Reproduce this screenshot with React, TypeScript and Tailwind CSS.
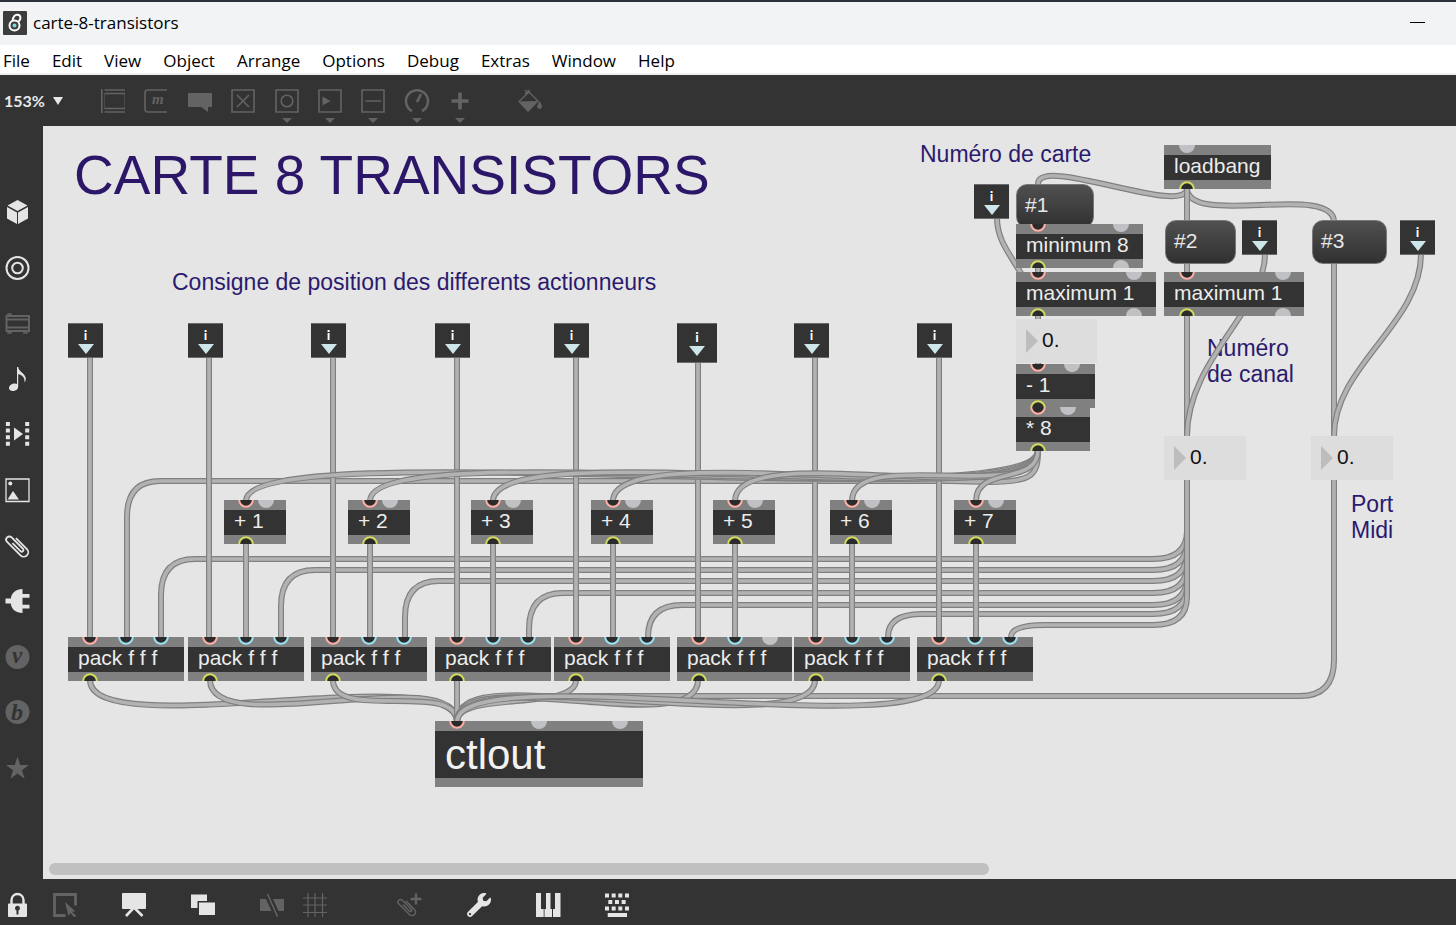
import { ReactNode } from "react";
import { FaWrench } from "react-icons/fa";

type Port = { at: number; kind: "hot" | "cold" | "out" | "idle" };

type ObjectBox = {
  text: string;
  x: number;
  y: number;
  w: number;
  inlets: Port[];
  outlets: Port[];
  large?: boolean;
};

// patcher coordinates are stored relative to the window, not to the canvas
const ORIGIN_X = 43;
const ORIGIN_Y = 126;

const place = (x: number, y: number, w?: number, h?: number) => ({
  left: x - ORIGIN_X,
  top: y - ORIGIN_Y,
  width: w,
  height: h,
});

const portColors = {
  hot: "#ffb0a4",
  cold: "#9be3f2",
  out: "#d3dc5c",
  idle: "#bfc1c4",
};

const menus = ["File", "Edit", "View", "Object", "Arrange", "Options", "Debug", "Extras", "Window", "Help"];

const packs: ObjectBox[] = [68, 188, 311, 435, 554, 677, 794, 917].map((x, i) => ({
  text: "pack f f f",
  x,
  y: 637,
  w: i === 5 ? 115 : 116,
  inlets: [
    { at: 22, kind: "hot" },
    { at: 58, kind: "cold" },
    { at: 93, kind: i === 5 ? "idle" : "cold" },
  ],
  outlets: [{ at: 22, kind: "out" }],
}));

const adders: ObjectBox[] = [224, 348, 471, 591, 713, 830, 954].map((x, i) => ({
  text: `+ ${i + 1}`,
  x,
  y: 500,
  w: 62,
  inlets: [
    { at: 22, kind: "hot" },
    { at: 42, kind: "idle" },
  ],
  outlets: [{ at: 22, kind: "out" }],
}));

const objects: ObjectBox[] = [
  ...packs,
  ...adders,
  {
    text: "loadbang",
    x: 1164,
    y: 145,
    w: 107,
    inlets: [{ at: 23, kind: "idle" }],
    outlets: [{ at: 23, kind: "out" }],
  },
  {
    text: "minimum 8",
    x: 1016,
    y: 224,
    w: 127,
    inlets: [{ at: 22, kind: "hot" }, { at: 105, kind: "idle" }],
    outlets: [{ at: 22, kind: "out" }, { at: 105, kind: "idle" }],
  },
  {
    text: "maximum 1",
    x: 1016,
    y: 272,
    w: 140,
    inlets: [{ at: 22, kind: "hot" }, { at: 118, kind: "idle" }],
    outlets: [{ at: 22, kind: "out" }, { at: 118, kind: "idle" }],
  },
  {
    text: "maximum 1",
    x: 1164,
    y: 272,
    w: 140,
    inlets: [{ at: 23, kind: "hot" }, { at: 119, kind: "idle" }],
    outlets: [{ at: 23, kind: "out" }, { at: 119, kind: "idle" }],
  },
  {
    text: "- 1",
    x: 1016,
    y: 364,
    w: 79,
    inlets: [{ at: 22, kind: "hot" }, { at: 56, kind: "idle" }],
    outlets: [{ at: 22, kind: "out" }],
  },
  {
    text: "* 8",
    x: 1016,
    y: 407,
    w: 74,
    inlets: [{ at: 22, kind: "hot" }, { at: 52, kind: "idle" }],
    outlets: [{ at: 22, kind: "out" }],
  },
  {
    text: "ctlout",
    x: 435,
    y: 721,
    w: 208,
    inlets: [{ at: 22, kind: "hot" }, { at: 104, kind: "idle" }, { at: 185, kind: "idle" }],
    outlets: [],
    large: true,
  },
];

const inletBoxes = [
  { x: 68, y: 323 },
  { x: 188, y: 323 },
  { x: 311, y: 323 },
  { x: 435, y: 323 },
  { x: 554, y: 323 },
  { x: 677, y: 323, size: 40 },
  { x: 794, y: 323 },
  { x: 917, y: 323 },
  { x: 974, y: 184 },
  { x: 1242, y: 220 },
  { x: 1400, y: 220 },
];

const messages = [
  { text: "#1", x: 1016, y: 184, w: 78 },
  { text: "#2", x: 1165, y: 220, w: 71 },
  { text: "#3", x: 1312, y: 220, w: 75 },
];

const numbers = [
  { label: "Numéro de carte", x: 1016, y: 319, w: 81 },
  { label: "Numéro de canal", x: 1164, y: 436, w: 82 },
  { label: "Port Midi", x: 1311, y: 436, w: 82 },
];

// a patch cord leaves downwards and arrives from above
const cord = (x1: number, y1: number, x2: number, y2: number, d: number) =>
  `M${x1} ${y1}C${x1} ${y1 + d} ${x2} ${y2 - d} ${x2} ${y2}`;

const channelCord = (x: number, y: number) => {
  const r = Math.min(36, 637 - y);
  return `M1187 480V${y - 28}Q1187 ${y} 1153 ${y}H${x + 34}Q${x} ${y} ${x} ${y + r}V637`;
};

const cords = [
  channelCord(161, 559),
  channelCord(281, 570),
  channelCord(405, 581),
  channelCord(529, 593),
  channelCord(648, 605),
  channelCord(888, 614),
  channelCord(1011, 625),
  "M1038 450C1038 474 1034 482 990 482L950 481H160Q127 481 127 517V637",
  ...[90, 209, 333, 457, 576, 698, 815, 939].map((x) => `M${x} 355V637`),
  ...adders.map((a) => `M${a.x + 22} 544V637`),
  cord(1038, 450, 246, 501, 70),
  cord(1038, 450, 370, 501, 70),
  cord(1038, 450, 493, 501, 70),
  cord(1038, 450, 613, 501, 68),
  cord(1038, 450, 735, 501, 65),
  cord(1038, 450, 852, 501, 56),
  cord(1038, 450, 976, 501, 36),
  "M1334 480V660Q1334 696 1300 696H540C500 694 457 694 457 722",
  cord(90, 680, 457, 722, 65),
  cord(210, 680, 457, 722, 62),
  cord(333, 680, 457, 722, 42),
  "M457 680V722",
  cord(576, 680, 457, 722, 32),
  cord(698, 680, 457, 722, 62),
  cord(815, 680, 457, 722, 64),
  cord(939, 680, 457, 722, 66),
  cord(1187, 188, 1038, 184, 30),
  cord(1187, 188, 1334, 222, 40),
  "M1187 188V436",
  "M1334 262V436",
  "M1038 262V370",
  "M997 218C997 242 1012 256 1026 282",
  "M1265 254C1265 310 1187 360 1187 436",
  cord(1421, 254, 1334, 436, 70),
];

function PortMark({ port, side }: { port: Port; side: "top" | "bottom" }) {
  const cy = side === "top" ? 0 : 8;
  return (
    <svg
      className={side === "top" ? "absolute top-0 w-4 h-2" : "absolute bottom-0 w-4 h-2"}
      style={{ left: port.at - 8 }}
      viewBox="0 0 16 8"
    >
      {port.kind === "idle" ? (
        <circle cx="8" cy={cy} r="8" fill={portColors.idle} />
      ) : (
        <circle cx="8" cy={cy} r="6.8" fill="#2b2b2b" stroke={portColors[port.kind]} strokeWidth="2" />
      )}
    </svg>
  );
}

function ObjectView({ box }: { box: ObjectBox }) {
  return (
    <div className="absolute bg-[#808080] pt-[10px] pb-[9px]" style={place(box.x, box.y, box.w)}>
      {box.inlets.map((p) => (
        <PortMark key={p.at} port={p} side="top" />
      ))}
      <div
        className={
          box.large
            ? "h-[47px] bg-[#333333] pl-[10px] text-[42px] leading-[47px] text-[#f2f2f2] whitespace-nowrap"
            : "h-[25px] bg-[#333333] pl-[10px] text-[21px] leading-[21px] text-[#ececec] whitespace-nowrap"
        }
      >
        {box.text}
      </div>
      {box.outlets.map((p) => (
        <PortMark key={p.at} port={p} side="bottom" />
      ))}
    </div>
  );
}

function Comment({ x, y, children }: { x: number; y: number; children: ReactNode }) {
  return (
    <p className="absolute text-[23px] leading-[26px] text-[#2b1a6e] whitespace-nowrap" style={place(x, y)}>
      {children}
    </p>
  );
}

function Patcher() {
  return (
    <main className="relative flex-1 overflow-hidden bg-[#e5e5e5] font-['Liberation_Sans',Arial,sans-serif]">
      <h1
        className="absolute text-[55px] leading-[60px] text-[#2b1667] whitespace-nowrap"
        style={place(74, 145)}
      >
        CARTE 8 TRANSISTORS
      </h1>
      <Comment x={172} y={269}>Consigne de position des differents actionneurs</Comment>
      <Comment x={920} y={141}>Numéro de carte</Comment>
      <Comment x={1207} y={335}>
        Numéro
        <br />
        de canal
      </Comment>
      <Comment x={1351} y={491}>
        Port
        <br />
        Midi
      </Comment>

      <svg className="absolute inset-0 w-full h-full" fill="none">
        <g transform={`translate(${-ORIGIN_X} ${-ORIGIN_Y})`}>
          {cords.map((d) => (
            <g key={d}>
              <path d={d} stroke="#808080" strokeWidth="6" />
              <path d={d} stroke="#b2b2b2" strokeWidth="3.6" />
            </g>
          ))}
        </g>
      </svg>

      {messages.map((m) => (
        <button
          key={m.text}
          type="button"
          className="absolute flex rounded-[11px] border border-[#777777] bg-linear-to-b from-[#505050] to-[#313131] pl-2 pt-[9px] text-[21px] leading-[21px] text-[#e6e6e6]"
          style={place(m.x, m.y, m.w, 44)}
        >
          {m.text}
        </button>
      ))}

      {numbers.map((n) => (
        <label key={n.label} className="absolute flex bg-[#dddddd] pl-[10px] pt-[10px]" style={place(n.x, n.y, n.w, 44)}>
          <svg className="w-3 h-6" viewBox="0 0 12 24">
            <path d="M0 0L12 12L0 24Z" fill="#bdbdbd" />
          </svg>
          <input
            aria-label={n.label}
            defaultValue="0."
            className="ml-1 h-[21px] w-12 bg-transparent text-[21px] leading-[21px] text-[#111111] outline-none"
          />
        </label>
      ))}

      {objects.map((o) => (
        <ObjectView key={`${o.x}-${o.y}`} box={o} />
      ))}

      {inletBoxes.map((b) => (
        <div
          key={`${b.x}-${b.y}`}
          className="absolute flex flex-col items-center justify-center border-y border-[#6a6a6a] bg-[#333333] font-['Lato',sans-serif]"
          style={place(b.x, b.y, b.size ?? 35, b.size ?? 35)}
        >
          <span className="text-[14px] leading-[14px] font-bold text-white">i</span>
          <svg className="mt-[2px] w-4 h-[10px]" viewBox="0 0 16 10">
            <path d="M0 0H16L8 10Z" fill="#cce6e9" />
          </svg>
        </div>
      ))}

      <div className="absolute bottom-1 left-[6px] h-3 w-[66.5%] rounded-full bg-[#c0c0c0]" />
    </main>
  );
}

function Tool({
  label,
  dim,
  menu,
  className = "",
  children,
}: {
  label: string;
  dim?: boolean;
  menu?: boolean;
  className?: string;
  children: ReactNode;
}) {
  return (
    <button
      type="button"
      aria-label={label}
      className={`relative h-6 w-6 shrink-0 ${dim ? "text-[#636363]" : "text-[#e5e5e5]"} ${className}`}
    >
      <svg className="h-6 w-6 overflow-visible" viewBox="0 0 24 24" fill="none" stroke="currentColor" strokeWidth="1.6">
        {children}
      </svg>
      {menu && (
        <svg className="absolute left-[7px] top-[29px] h-[5px] w-[10px]" viewBox="0 0 10 5">
          <path d="M0 0H10L5 5Z" fill="currentColor" />
        </svg>
      )}
    </button>
  );
}

const clipPath =
  "M16.5 5V20.5A4.5 4.5 0 0 1 7.5 20.5V1.5A3.2 3.2 0 0 1 13.9 1.5V18A1.8 1.8 0 0 1 10.5 18V6";

function TopTools() {
  return (
    <div className="flex h-[51px] items-center bg-[#333333]">
      <button
        type="button"
        className="flex w-[101px] items-center gap-2 pl-1 font-['Lato',sans-serif] text-[16px] font-bold text-[#e8e8e8]"
      >
        153%
        <svg className="h-2 w-[10px]" viewBox="0 0 10 8">
          <path d="M0 0H10L5 8Z" fill="currentColor" />
        </svg>
      </button>
      <div className="flex w-[371px] justify-between">
        <Tool label="Object" dim>
          <path d="M0.8 0V24M3.5 1H24M3.5 4.5H24M3.5 19.5H24M3.5 23H24" />
          <path d="M3.5 5V19M23.5 5V19" strokeWidth="0.5" />
        </Tool>
        <Tool label="Message" dim>
          <path d="M23 1H4Q1 1 1 4V20Q1 23 4 23H23" />
          <text
            x="8"
            y="15"
            fontSize="15"
            stroke="none"
            fill="currentColor"
            className="font-['Liberation_Serif',serif] font-bold italic"
          >
            m
          </text>
        </Tool>
        <Tool label="Comment" dim>
          <path d="M0 4H24V18H20V23L13 18H0Z" fill="currentColor" stroke="none" />
        </Tool>
        <Tool label="Toggle" dim>
          <path d="M1 1H23V23H1ZM6 6L18 18M18 6L6 18" />
        </Tool>
        <Tool label="Button" dim menu>
          <path d="M1 1H23V23H1Z" />
          <circle cx="12" cy="12" r="5.8" />
        </Tool>
        <Tool label="Playback" dim menu>
          <path d="M1 1H23V23H1Z" />
          <path d="M4.5 7.5L12.5 12L4.5 16.5Z" fill="currentColor" stroke="none" />
        </Tool>
        <Tool label="Slider" dim menu>
          <path d="M1 1H23V23H1ZM4.5 12H20" />
        </Tool>
        <Tool label="Dial" dim menu>
          <path d="M7 22A11 11 0 1 1 17 22M12 13L16 5" strokeWidth="2.6" />
        </Tool>
        <Tool label="Add" dim menu>
          <path d="M12 3.5V20.5M3.5 12H20.5" strokeWidth="3.6" />
        </Tool>
      </div>
      <Tool label="Format" dim className="ml-[46px]">
        <path d="M12 2L1 12.5L10 22L20 12L11 3M7 1L10 4M11 1L7 5" strokeWidth="1.3" />
        <path d="M1 12.5L20 12L10 22.5Z" fill="currentColor" stroke="none" />
        <path d="M21.5 12Q24 16 24 17.5A2.4 2.4 0 0 1 19.2 17.5Q19.2 16 21.5 12Z" fill="currentColor" stroke="none" />
      </Tool>
    </div>
  );
}

function SideTools() {
  return (
    <aside className="w-[43px] shrink-0 bg-[#333333] pl-[5px] pt-[74px]">
      <div className="flex h-[580px] flex-col justify-between">
        <Tool label="Objects">
          <path
            d="M12.5 0L22.5 5.5L12.5 11L2.5 5.5ZM2 7L12 12.5V24L2 18.5ZM23 7L13 12.5V24L23 18.5Z"
            fill="currentColor"
            stroke="none"
          />
        </Tool>
        <Tool label="Target">
          <circle cx="12.5" cy="12" r="11" strokeWidth="2" />
          <circle cx="12.5" cy="12" r="5.3" strokeWidth="2" />
        </Tool>
        <Tool label="Devices" dim>
          <path d="M1.5 5H24V20H1.5ZM2 8.5H23M2 16.5H23" strokeWidth="2" />
          <path d="M3 4V3H6V4M3 21V22H6V21M19 21V22H22V21" strokeWidth="1.4" />
        </Tool>
        <Tool label="Audio">
          <path
            d="M12 0H13.2C13.6 5 20.8 6.5 20.8 12Q20.8 14 19.6 15.5C20 10.5 17 7.5 13.2 7.2V19.5C13.2 22.5 10.5 24 7.8 24C5.5 24 4 22.8 4 21C4 18.5 7 16.5 9.8 16.5Q11 16.5 12 17Z"
            fill="currentColor"
            stroke="none"
          />
        </Tool>
        <Tool label="Video">
          <path d="M2.9 0V24M22.2 0V24" strokeWidth="4" strokeDasharray="4 2.6" />
          <path d="M9 5.5L18 12L9 18.5Z" fill="currentColor" stroke="none" />
        </Tool>
        <Tool label="Images">
          <path d="M1 1H24V23.5H1Z" strokeWidth="1.3" />
          <circle cx="5.3" cy="5.5" r="2" fill="currentColor" stroke="none" />
          <path d="M2.5 21.5L8 13L14 21.5Z" fill="currentColor" stroke="none" />
        </Tool>
        <Tool label="Clippings">
          <path d={clipPath} transform="translate(12.5 12) rotate(-45) translate(-12 -11.7)" strokeWidth="1.8" />
        </Tool>
        <Tool label="Plug-ins">
          <path
            d="M17.5 0V5H24.5V8.8H17.5V15.8H24.5V19.6H17.5V24C11 24 6.5 20.5 5.8 14.5H0.5V9.5H5.8C6.5 4 11 0 17.5 0Z"
            fill="currentColor"
            stroke="none"
          />
        </Tool>
        <Tool label="Vizzie" dim>
          <circle cx="12.5" cy="12" r="12" fill="currentColor" stroke="none" />
          <text
            x="7"
            y="18"
            fontSize="23"
            fill="#333333"
            stroke="none"
            className="font-['Liberation_Serif',serif] font-bold italic"
          >
            v
          </text>
        </Tool>
        <Tool label="BEAP" dim>
          <circle cx="12.5" cy="12" r="12" fill="currentColor" stroke="none" />
          <text
            x="6"
            y="20"
            fontSize="24"
            fill="#333333"
            stroke="none"
            className="font-['Liberation_Serif',serif] font-bold italic"
          >
            b
          </text>
        </Tool>
        <Tool label="Favorites" dim>
          <path
            d="M12.5 0.5L15.2 9H24L17 14.2L19.6 22.8L12.5 17.6L5.4 22.8L8 14.2L1 9H9.8Z"
            fill="currentColor"
            stroke="none"
          />
        </Tool>
      </div>
    </aside>
  );
}

function BottomTools() {
  return (
    <footer className="flex h-[46px] shrink-0 items-center bg-[#333333] pl-[5px] pt-[5px]">
      <Tool label="Lock">
        <path d="M6.5 12V7A6 6 0 0 1 18.5 7V12" strokeWidth="2.4" />
        <path
          fillRule="evenodd"
          d="M4 10.5H21Q22 10.5 22 11.5V23Q22 24 21 24H4Q3 24 3 23V11.5Q3 10.5 4 10.5ZM10 15.5A2.5 2.5 0 0 0 11.5 17.5V21.5H13.5V17.5A2.5 2.5 0 1 0 10 15.5Z"
          fill="currentColor"
          stroke="none"
        />
      </Tool>
      <Tool label="Select" dim className="ml-6">
        <path d="M12.5 22.5H1.5V1.5H22.5V12.5" strokeWidth="2.8" />
        <path d="M12 9L22.5 18.5L18.8 18.8L23.5 23L21 24L17.5 20L15.5 23Z" fill="currentColor" stroke="none" />
      </Tool>
      <Tool label="Presentation" className="ml-[45px]">
        <path d="M0 1Q0 0 1 0H23Q24 0 24 1V15Q24 16 23 16H1Q0 16 0 15Z" fill="currentColor" stroke="none" />
        <path d="M12 14.5L4 23M12 14.5L20.5 23" strokeWidth="2.6" />
      </Tool>
      <Tool label="Patcher windows" className="ml-[45px]">
        <path d="M0 1.5H16V8H6.5V15H0Z" fill="currentColor" stroke="none" />
        <path d="M8 9.5H24V22H8Z" fill="currentColor" stroke="none" />
      </Tool>
      <Tool label="Mute" dim className="ml-[45px]">
        <path d="M0 6H6L11.5 18H0ZM13 6H24V18H18.5Z" fill="currentColor" stroke="none" />
        <path d="M7.5 1L17.5 23.5" />
      </Tool>
      <Tool label="Grid" dim className="ml-[19px]">
        <path d="M5 0V24M12 0V24M19.5 0V24M0 5H24M0 12H24M0 19.5H24" strokeWidth="1.2" />
      </Tool>
      <Tool label="Add clipping" dim className="ml-[70px]">
        <path
          d={clipPath}
          transform="translate(10 14) rotate(-45) scale(0.8) translate(-12 -11.7)"
          strokeWidth="1.8"
        />
        <path d="M19 0.5V11.5M13.5 6H24.5" strokeWidth="2.4" />
      </Tool>
      <button type="button" aria-label="Inspector" className="ml-[46px] text-2xl text-[#e5e5e5]">
        <FaWrench />
      </button>
      <Tool label="Piano" className="ml-[45px]">
        <path
          d="M0 0H5V16H7.7V24H0ZM10 0H14.5V16H16V24H8.5V16H10ZM19 0H24.5V24H17V16H19Z"
          fill="currentColor"
          stroke="none"
        />
      </Tool>
      <Tool label="Keyboard" className="ml-[45px]">
        <path d="M0 2.5H24M0 15.5H24" strokeWidth="4" strokeDasharray="4 2.66" />
        <path d="M3.3 9H22" strokeWidth="4" strokeDasharray="4 2.66" />
        <path d="M2.7 22H22" strokeWidth="4" />
      </Tool>
    </footer>
  );
}

export default function App() {
  return (
    <div className="flex h-screen flex-col overflow-hidden font-['Open_Sans',sans-serif] text-[17px] text-black">
      <header className="flex h-[45px] shrink-0 items-center border-t-2 border-[#2c313a] bg-[#f1f3f5] pl-[3px] pr-[31px] pb-[2px]">
        <svg className="h-6 w-6" viewBox="0 0 24 24" fill="none">
          <rect width="24" height="24" rx="1" fill="#3d3d3d" />
          <circle cx="11.5" cy="14.5" r="5" stroke="white" strokeWidth="2" />
          <path d="M9.5 10C10 5.5 12 3.5 14.5 3.8C18 4.2 18.5 8 15.5 10.5" stroke="white" strokeWidth="2" />
          <circle cx="11.5" cy="14.5" r="2" fill="#7fd8dc" />
        </svg>
        <span className="ml-[6px]">carte-8-transistors</span>
        <button type="button" aria-label="Minimize" className="ml-auto h-5 w-[15px]">
          <span className="block h-px bg-black" />
        </button>
      </header>
      <nav className="flex h-[30px] shrink-0 items-center gap-[22px] border-b-2 border-[#efefef] bg-white pl-[3px] pt-1">
        {menus.map((m) => (
          <button key={m} type="button">
            {m}
          </button>
        ))}
      </nav>
      <TopTools />
      <div className="flex min-h-0 flex-1">
        <SideTools />
        <Patcher />
      </div>
      <BottomTools />
    </div>
  );
}
